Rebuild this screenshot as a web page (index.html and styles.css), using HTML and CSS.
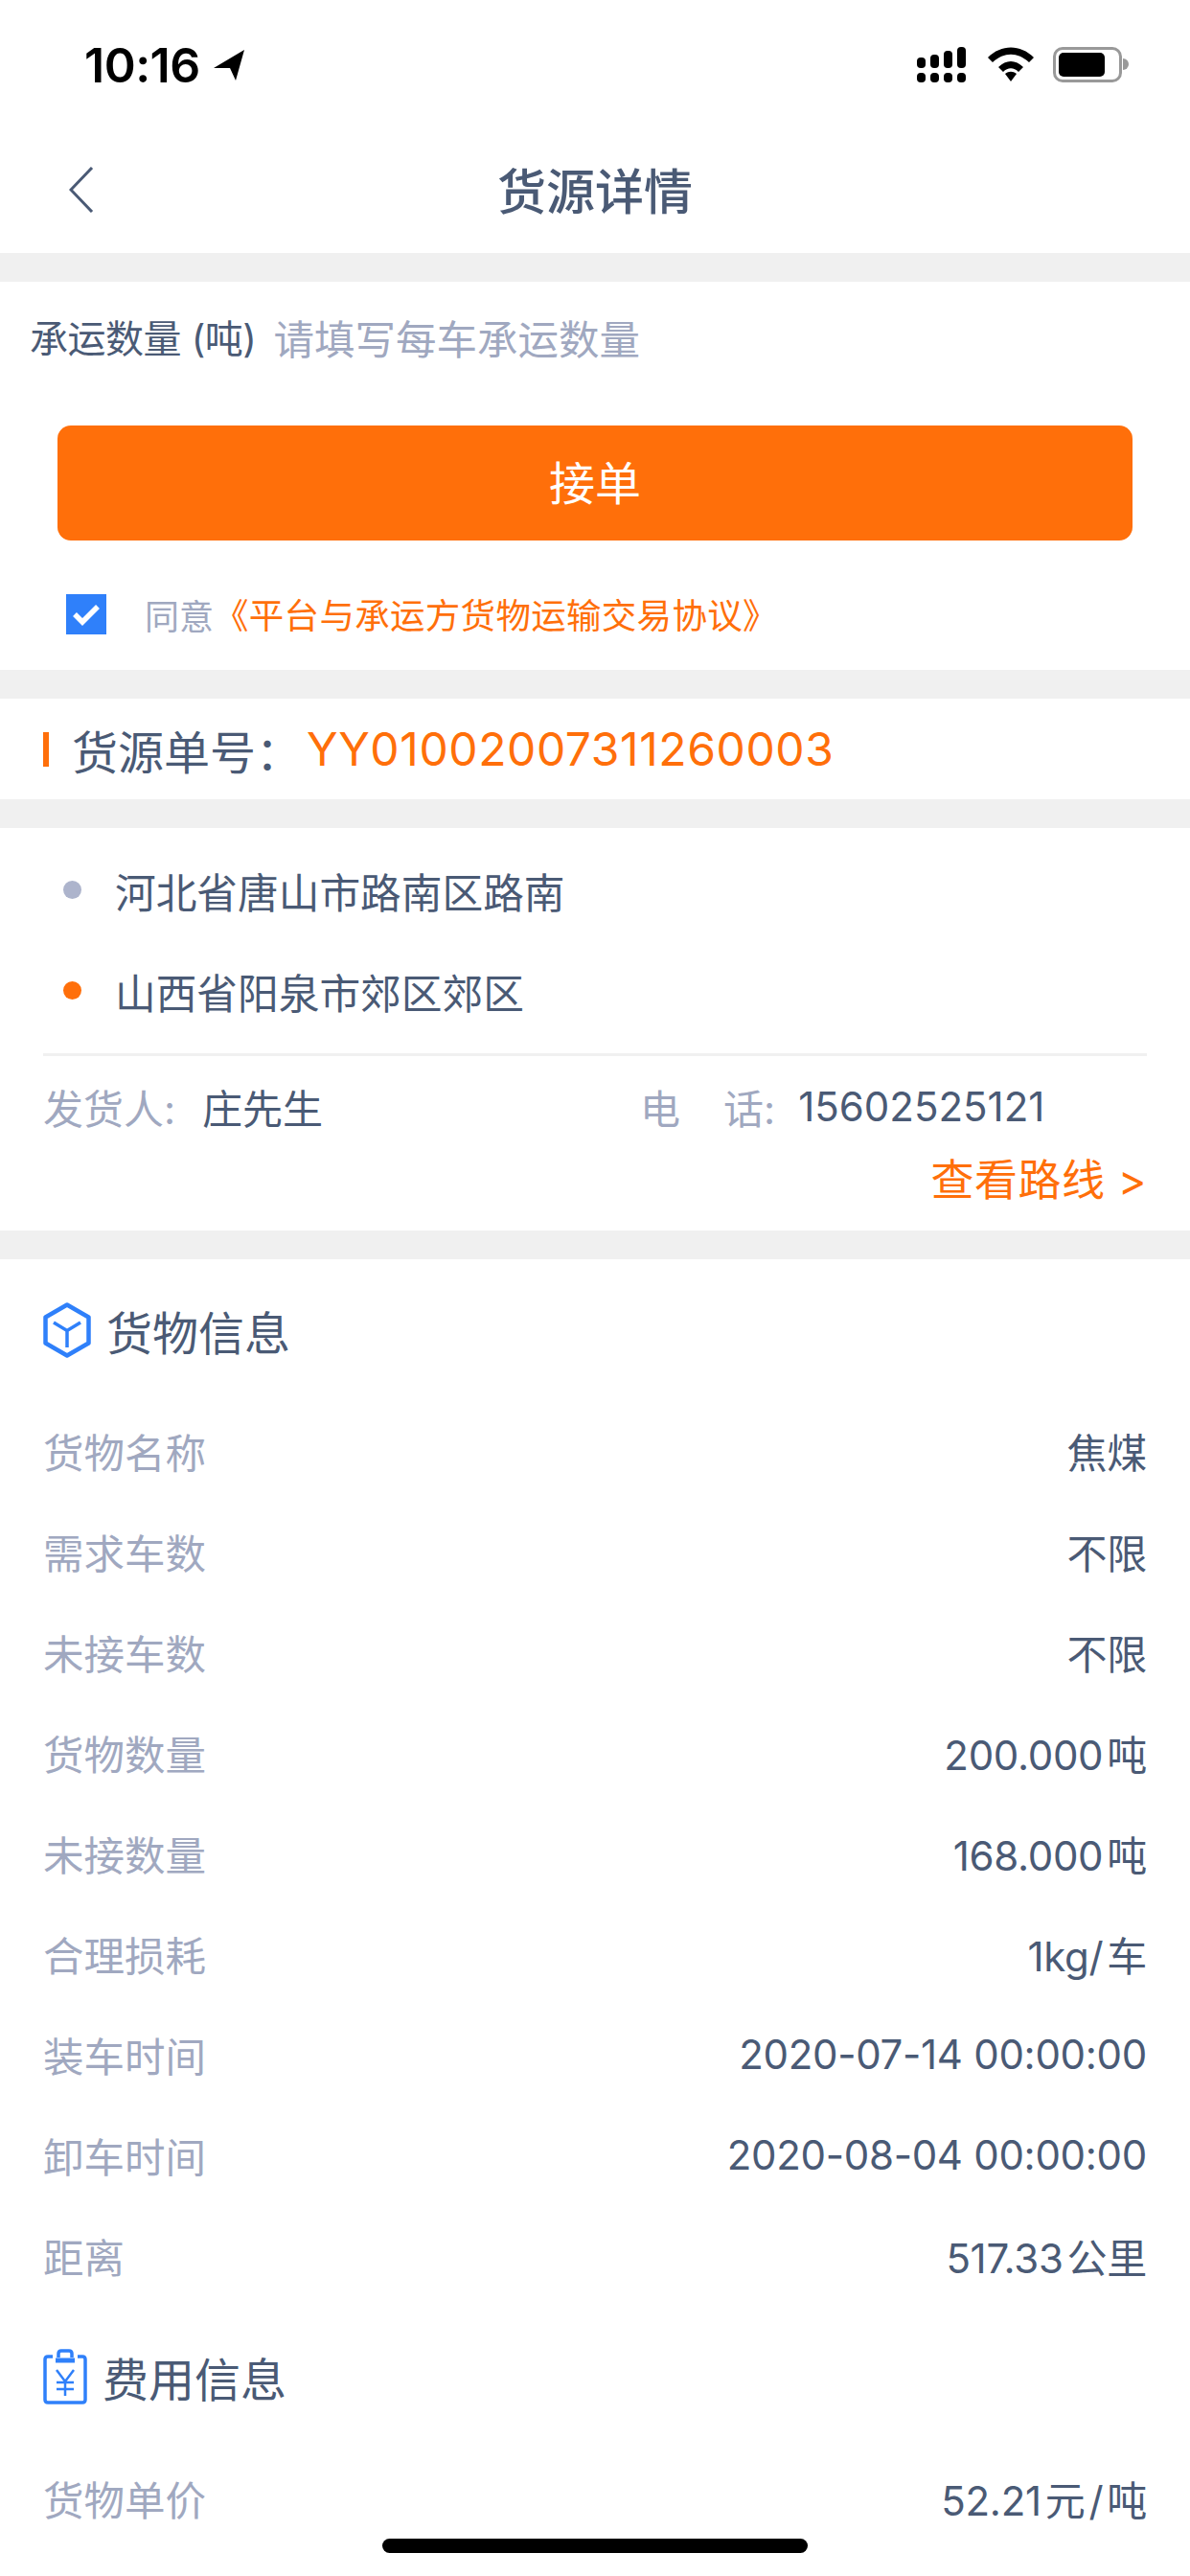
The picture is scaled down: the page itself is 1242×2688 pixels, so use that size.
FILE: index.html
```html
<!DOCTYPE html>
<html>
	<head>
		<meta charset="utf-8" />
		<meta name="viewport" content="width=device-width, initial-scale=1" />
		<title>货源详情</title>
		<link rel="stylesheet" href="styles.css">
	</head>
	<body>
		<div class="page">
			<!-- status bar -->
			<div class="status">
				<div class="status-left">
					<span class="time">10:16</span>
					<svg class="loc" width="32" height="32" viewBox="0 0 32 32"><path d="M32 0 L0 19 L17 19 L23 32 Z" fill="#000"/></svg>
				</div>
				<div class="status-right">
					<svg class="signal" width="52" height="37" viewBox="0 0 52 37" fill="#000">
						<rect x="0" y="11" width="9" height="11" rx="4"/><rect x="14" y="8" width="9" height="14" rx="4"/><rect x="28" y="4" width="9" height="18" rx="4"/><rect x="42" y="0" width="9" height="22" rx="4"/>
						<rect x="0" y="27" width="9" height="10" rx="4"/><rect x="14" y="27" width="9" height="10" rx="4"/><rect x="28" y="27" width="9" height="10" rx="4"/><rect x="42" y="27" width="9" height="10" rx="4"/>
					</svg>
					<svg class="wifi" width="48" height="36" viewBox="0 0 48 36" fill="#000">
						<path d="M0 11 C14 -3 34 -3 48 11 L43 16 C31 5 17 5 5 16 Z"/>
						<path d="M11 21 C19 13 29 13 37 21 L32 26 C27 21 21 21 16 26 Z"/>
						<path d="M18 28 C22 25 26 25 30 28 L24 36 Z"/>
					</svg>
					<div class="battery"><div class="battery-fill"></div></div>
					<div class="battery-cap"></div>
				</div>
			</div>

			<!-- nav -->
			<div class="nav">
				<svg class="back" width="26" height="48" viewBox="0 0 26 48"><path d="M24 1 L2 24 L24 47" fill="none" stroke="#4a5a75" stroke-width="3"/></svg>
				<span class="nav-title">货源详情</span>
			</div>

			<div class="gap"></div>

			<div class="take">
				<div class="amount">
					<span class="amount-label">承运数量 (吨)</span>
					<span class="amount-hint">请填写每车承运数量</span>
				</div>
				<div class="take-btn">接单</div>
				<div class="agree">
					<span class="check">
						<svg width="30" height="24" viewBox="0 0 30 24"><path d="M3 12 L11 20 L27 4" fill="none" stroke="#fff" stroke-width="5.5"/></svg>
					</span>
					<span class="agree-text">同意</span>
					<span class="agree-link">《平台与承运方货物运输交易协议》</span>
				</div>
			</div>

			<div class="gap"></div>

			<div class="order">
				<span class="order-bar"></span>
				<span class="order-label">货源单号：</span>
				<span class="order-no">YY01002007311260003</span>
			</div>

			<div class="gap"></div>

			<div class="route">
				<div class="place"><i class="dot"></i><span>河北省唐山市路南区路南</span></div>
				<div class="place"><i class="dot dot-orange"></i><span>山西省阳泉市郊区郊区</span></div>
				<div class="line"></div>
				<div class="sender">
					<div class="sender-name"><span class="muted">发货人:</span><span>庄先生</span></div>
					<div class="sender-tel"><span class="muted tel-label"><span>电</span><span>话:</span></span><span class="tel-no">15602525121</span></div>
				</div>
				<div class="route-link">查看路线 &gt;</div>
			</div>

			<div class="gap"></div>

			<div class="info">
				<div class="info-head">
					<svg width="50" height="58" viewBox="0 0 50 58" fill="none" stroke="#2f80fa">
						<path d="M25 2.5 L47.5 15.5 V42.5 L25 55.5 L2.5 42.5 V15.5 Z" stroke-width="4.5" stroke-linejoin="round"/>
						<path d="M11 21 L25 29.5 L39 21 M25 29.5 V47" stroke-width="3.5"/>
					</svg>
					<span>货物信息</span>
				</div>
				<div class="row"><span>货物名称</span><b>焦煤</b></div>
				<div class="row"><span>需求车数</span><b>不限</b></div>
				<div class="row"><span>未接车数</span><b>不限</b></div>
				<div class="row"><span>货物数量</span><b>200.000<i>吨</i></b></div>
				<div class="row"><span>未接数量</span><b>168.000<i>吨</i></b></div>
				<div class="row"><span>合理损耗</span><b>1kg/<i>车</i></b></div>
				<div class="row"><span>装车时间</span><b>2020-07-14 00:00:00</b></div>
				<div class="row"><span>卸车时间</span><b>2020-08-04 00:00:00</b></div>
				<div class="row"><span>距离</span><b>517.33<i>公里</i></b></div>

				<div class="info-head fee-head">
					<svg width="46" height="58" viewBox="0 0 46 58" fill="none" stroke="#2f80fa">
						<path d="M10 8 H5 Q2 8 2 11 V53 Q2 56 5 56 H41 Q44 56 44 53 V11 Q44 8 41 8 H36" stroke-width="3.5"/>
						<path d="M13 12 H33" stroke-width="5"/>
						<path d="M16 9 V5 Q16 2 19 2 H27 Q30 2 30 5 V9" stroke-width="3.5"/>
						<path d="M14 22 L23 34 L32 22 M23 34 V49 M14 35 H32 M14 42 H32" stroke-width="2.5"/>
					</svg>
					<span>费用信息</span>
				</div>
				<div class="row"><span>货物单价</span><b>52.21<i>元</i><i>/</i><i>吨</i></b></div>
			</div>

			<div class="home-bar"></div>
		</div>
	</body>
</html>
```

FILE: styles.css
```css
* {
    box-sizing: border-box;
}

body {
    margin: 0;
    background: #fff;
}

.page {
    position: relative;
    width: 1242px;
    height: 2688px;
    overflow: hidden;
    background: #fff;
    color: #4a5a75;
    font-family: "Inter", "Noto Sans CJK SC", sans-serif;
    font-size: 42px;
    text-spacing-trim: space-all;
}

.status {
    height: 100px;
    padding: 43px 64px 0 88px;
    display: flex;
    justify-content: space-between;
    align-items: flex-start;
    color: #000;
}

.status-left {
    display: flex;
    align-items: center;
    gap: 14px;
}

.time {
    font-size: 50px;
    font-weight: 600;
    line-height: 50px;
    letter-spacing: -0.5px;
}

.status-right {
    display: flex;
    align-items: flex-start;
    padding-top: 6px;
}

.signal {
    margin-right: 22px;
}

.wifi {
    margin-right: 20px;
}

.battery {
    width: 72px;
    height: 37px;
    padding: 3px;
    border: 3px solid #999;
    border-radius: 10px;
}

.battery-fill {
    width: 48px;
    height: 100%;
    background: #000;
    border-radius: 5px;
}

.battery-cap {
    width: 6px;
    height: 12px;
    margin: 12px 0 0 1px;
    background: #999;
    border-radius: 0 6px 6px 0;
}

.nav {
    position: relative;
    height: 164px;
    display: flex;
    align-items: center;
    justify-content: center;
    padding-top: 30px;
}

.back {
    position: absolute;
    left: 72px;
    top: 74px;
}

.nav-title {
    font-size: 51px;
    font-weight: 500;
}

.gap {
    height: 30px;
    background: #f0f0f0;
}

.take {
    height: 405px;
    padding-top: 27px;
}

.amount {
    height: 60px;
    padding-left: 31px;
    display: flex;
    align-items: center;
    gap: 18px;
}

.amount-label {
    font-size: 40px;
    letter-spacing: -0.5px;
}

.amount-hint {
    color: #a0a8c0;
    font-size: 42.5px;
}

.take-btn {
    margin: 63px 60px 0;
    height: 120px;
    padding-bottom: 6px;
    border-radius: 14px;
    background: #ff6f0a;
    color: #fff;
    font-size: 48px;
    display: flex;
    align-items: center;
    justify-content: center;
}

.agree {
    margin-top: 50px;
    padding-left: 69px;
    display: flex;
    align-items: center;
}

.check {
    width: 42px;
    height: 42px;
    margin-right: 40px;
    background: #2f80fa;
    display: flex;
    align-items: center;
    justify-content: center;
}

.agree-text {
    font-size: 36px;
    color: #a0a8c0;
}

.agree-link {
    font-size: 36.5px;
    letter-spacing: 0.3px;
    color: #ff6f0a;
}

.order {
    height: 105px;
    padding-left: 45px;
    display: flex;
    align-items: center;
    font-size: 48px;
}

.order-bar {
    width: 6px;
    height: 36px;
    margin-right: 24px;
    background: #ff6f0a;
}

.order-no {
    color: #ff6f0a;
    font-size: 48px;
    margin-left: 5px;
    letter-spacing: 0.6px;
}

.route {
    height: 420px;
    padding: 12px 45px 0;
    font-size: 42.7px;
}

.place {
    height: 105px;
    display: flex;
    align-items: center;
}

.dot {
    width: 19px;
    height: 19px;
    margin: 0 35px 0 21px;
    border-radius: 50%;
    background: #adb4cc;
}

.dot-orange {
    background: #ff6f0a;
}

.line {
    height: 3px;
    margin-top: 13px;
    background: #f0f0f0;
}

.sender {
    height: 104px;
    display: flex;
    align-items: center;
    font-size: 42px;
}

.sender-name {
    width: 623px;
    display: flex;
    gap: 28px;
}

.muted {
    color: #a0a8c0;
}

.sender-tel {
    display: flex;
    align-items: center;
    gap: 24px;
}

.tel-label {
    display: flex;
    gap: 45px;
}

.route-link {
    margin-top: -10px;
    text-align: right;
    color: #ff6f0a;
    font-size: 45px;
    letter-spacing: 0.5px;
}

.info {
    padding: 0 45px;
}

.info-head {
    height: 147px;
    display: flex;
    align-items: center;
    gap: 16px;
    font-size: 48px;
}

.fee-head {
    height: 148px;
}

.row {
    height: 105px;
    display: flex;
    align-items: center;
    justify-content: space-between;
    color: #a0a8c0;
}

.row span {
    font-size: 42.5px;
}

.row b {
    font-weight: 400;
    color: #4a5a75;
    letter-spacing: -0.3px;
}

.row i {
    font-style: normal;
    margin-left: 4px;
}

.home-bar {
    position: absolute;
    left: 399px;
    top: 2649px;
    width: 444px;
    height: 15px;
    border-radius: 8px;
    background: #000;
}
```
